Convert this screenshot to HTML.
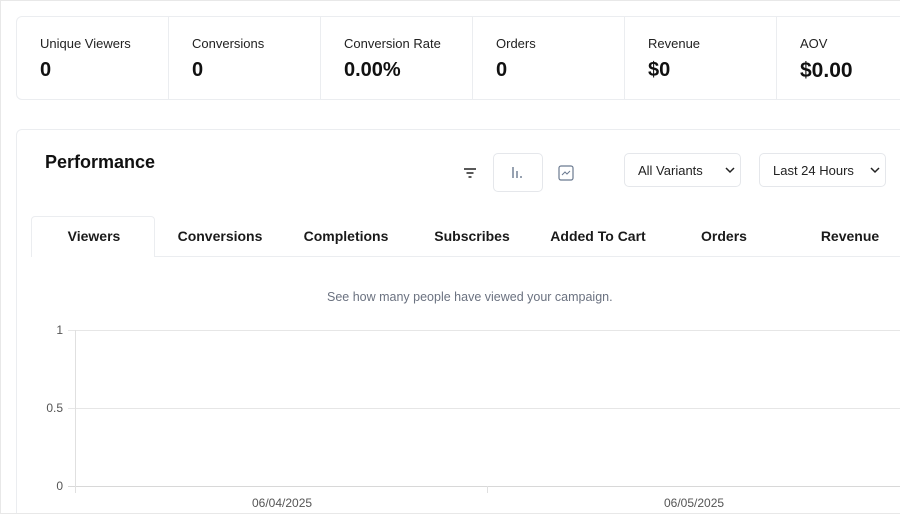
<!DOCTYPE html>
<html><head><style>
*{box-sizing:border-box;margin:0;padding:0}
html,body{width:900px;height:514px;overflow:hidden}
body{background:#fff;font-family:"Liberation Sans",sans-serif;color:#111;position:relative}
.frame{position:absolute;left:0;top:0;width:920px;height:514px;border:1px solid #e8e8e8}
.stats{position:absolute;left:16px;top:16px;width:940px;height:84px;border:1px solid #ebedf0;border-radius:6px;display:flex}
.stat{width:152px;flex-shrink:0;border-right:1px solid #ebedf0;padding:19px 0 0 23px}
.stat .l{font-size:13px;color:#222}
.stat .v{font-size:20px;font-weight:bold;margin-top:8px}
.perf{position:absolute;left:16px;top:129px;width:900px;height:385px;border:1px solid #ebedf0;border-bottom:none;border-radius:6px 6px 0 0}
.abs{position:absolute}
.sel{position:absolute;top:23px;height:34px;border:1px solid #e5e7eb;border-radius:5px;font-size:13px;padding:9px 0 0 13px;color:#222}
.tab{position:absolute;top:86px;width:126px;height:40px;text-align:center;font-size:14px;font-weight:bold;line-height:40px;color:#1a1a1a}
.gl{position:absolute;height:1px;background:#e6e6e6}
.yl{position:absolute;font-size:12px;color:#555;text-align:right;width:30px}
</style></head><body>
<div class="frame"></div>
<div class="stats">
<div class="stat"><div class="l">Unique Viewers</div><div class="v">0</div></div>
<div class="stat"><div class="l">Conversions</div><div class="v">0</div></div>
<div class="stat"><div class="l">Conversion Rate</div><div class="v">0.00%</div></div>
<div class="stat"><div class="l">Orders</div><div class="v">0</div></div>
<div class="stat"><div class="l">Revenue</div><div class="v">$0</div></div>
<div class="stat" style="border:none"><div class="l">AOV</div><div class="v" style="font-size:21px">$0.00</div></div>
</div>
<div class="perf">
<div class="abs" style="left:28px;top:22px;font-size:18px;font-weight:bold">Performance</div>
<svg class="abs" style="left:446px;top:37px" width="14" height="12"><path d="M1 2h12M3.5 6h7M5.5 10h3" stroke="#222" stroke-width="1.6"/></svg>
<div class="abs" style="left:476px;top:23px;width:50px;height:39px;border:1px solid #e5e7eb;border-radius:5px"></div>
<svg class="abs" style="left:494px;top:36px" width="14" height="14"><path d="M2 1v11M6 5v7M10 10v2" stroke="#6b7a90" stroke-width="1.4"/></svg>
<svg class="abs" style="left:541px;top:35px" width="16" height="16"><rect x="1" y="1" width="14" height="14" rx="2" fill="none" stroke="#6b7a90" stroke-width="1.2"/><path d="M4 10l3-3 2 2 3-3" fill="none" stroke="#6b7a90" stroke-width="1"/></svg>
<div class="sel" style="left:607px;width:117px">All Variants<svg class="abs" style="left:100px;top:13px" width="10" height="7"><path d="M1 1l4 4 4-4" fill="none" stroke="#222" stroke-width="1.5"/></svg></div>
<div class="sel" style="left:742px;width:127px">Last 24 Hours<svg class="abs" style="left:110px;top:13px" width="10" height="7"><path d="M1 1l4 4 4-4" fill="none" stroke="#222" stroke-width="1.5"/></svg></div>
<div class="abs" style="left:14px;top:86px;width:124px;height:41px;border:1px solid #ebedf0;border-bottom:none;border-radius:4px 4px 0 0;background:#fff"></div>
<div class="gl" style="left:138px;top:126px;width:800px;background:#ebedf0"></div>
<div class="tab" style="left:14px">Viewers</div>
<div class="tab" style="left:140px">Conversions</div>
<div class="tab" style="left:266px">Completions</div>
<div class="tab" style="left:392px">Subscribes</div>
<div class="tab" style="left:518px">Added To Cart</div>
<div class="tab" style="left:644px">Orders</div>
<div class="tab" style="left:770px">Revenue</div>
<div class="abs" style="left:310px;top:160px;font-size:12.5px;color:#6b7280">See how many people have viewed your campaign.</div>
</div>
<div class="gl" style="left:68px;top:330px;width:840px"></div>
<div class="gl" style="left:68px;top:408px;width:840px"></div>
<div class="gl" style="left:68px;top:486px;width:840px;background:#d8d8d8"></div>
<div class="abs" style="left:75px;top:330px;width:1px;height:163px;background:#e0e0e0"></div>
<div class="abs" style="left:487px;top:486px;width:1px;height:7px;background:#e0e0e0"></div>
<div class="yl" style="left:33px;top:323px">1</div>
<div class="yl" style="left:33px;top:401px">0.5</div>
<div class="yl" style="left:33px;top:479px">0</div>
<div class="abs" style="left:252px;top:496px;font-size:12px;color:#555">06/04/2025</div>
<div class="abs" style="left:664px;top:496px;font-size:12px;color:#555">06/05/2025</div>
<div class="abs" style="left:0;top:513px;width:900px;height:1px;background:#e8e8e8"></div>
</body></html>
